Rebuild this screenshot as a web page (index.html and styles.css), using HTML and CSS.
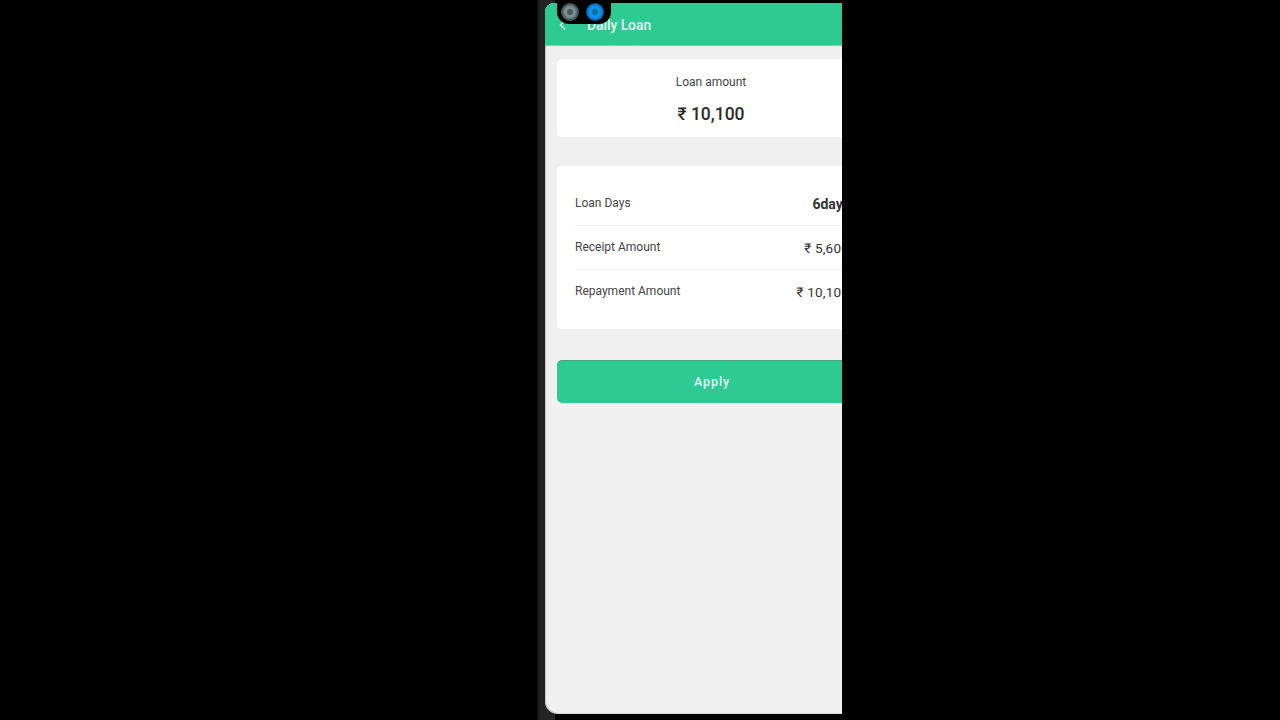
FILE: index.html
```html
<!DOCTYPE html>
<html lang="en">
  <head>
    <meta charset="UTF-8" />
    <meta name="viewport" content="width=device-width, initial-scale=1.0" />
    <title>Daily Loan</title>
    <link rel="stylesheet" href="styles.css">
  </head>
  <body>
    <div class="bezel">
      <div class="phone">
        <div class="screen">
          <header class="app-header">
            <svg class="back-icon" width="10" height="12" viewBox="0 0 10 12" fill="none">
              <path d="M7 1.5 L2.5 6 L7 10.5" stroke="#d8f5ea" stroke-width="1.5" />
            </svg>
            <span class="app-title">Daily Loan</span>
          </header>

          <div class="content">
            <section class="card amount-card">
              <div class="amount-label">Loan amount</div>
              <div class="amount-value">₹ 10,100</div>
            </section>

            <section class="card details-card">
              <div class="row">
                <span class="row-label">Loan Days</span>
                <span class="row-value strong">6days</span>
              </div>
              <div class="row">
                <span class="row-label">Receipt Amount</span>
                <span class="row-value">₹ 5,600</span>
              </div>
              <div class="row">
                <span class="row-label">Repayment Amount</span>
                <span class="row-value">₹ 10,100</span>
              </div>
            </section>

            <button class="apply-btn">Apply</button>
          </div>
        </div>

        <div class="camera-pill">
          <span class="lens lens-grey"></span>
          <span class="lens lens-blue"></span>
        </div>
      </div>
    </div>
  </body>
</html>
```

FILE: styles.css
```css
html,
body {
  height: 100%;
}

body {
  margin: 0;
  background: #000;
  font-family: Roboto, "Liberation Sans", sans-serif;
  overflow: hidden;
}

/* dark edge of the device, only seen left of the screen */
.bezel {
  width: 297px;
  height: 717px;
  margin-left: 537px;
  padding: 3px 0 0 8px;
  background: linear-gradient(to right, #0a0a0a 0, #242424 3px, #242424 100%) no-repeat;
  background-size: 18px 100%;
}

.phone {
  position: relative;
  width: 297px;
  height: 711px;
  overflow: hidden;
  background: #f0f0f0;
  border-radius: 9px 0 0 13px;
  border-bottom: 1px solid #d8d8d8;
  box-sizing: border-box;
  box-shadow: inset 1px 0 0 #c4c4c4;
}

.screen {
  width: 332px;
}

.app-header {
  display: flex;
  align-items: center;
  height: 41px;
  padding-top: 1px;
  background: #2dca93;
  border-bottom: 1px solid #5fdcb0;
  padding-left: 13px;
}

.back-icon {
  margin-right: 19px;
}

.app-title {
  color: #eafaf4;
  font-size: 13.8px;
  font-weight: 500;
}

.content {
  padding: 13px 12px 0;
}

.card {
  background: #fff;
  border-radius: 5px;
}

.amount-card {
  height: 78px;
  text-align: center;
  padding-top: 16px;
  box-sizing: border-box;
}

.amount-label {
  font-size: 12px;
  line-height: 14px;
  color: #444;
}

.amount-value {
  margin-top: 15px;
  font-size: 17.5px;
  line-height: 20px;
  font-weight: 500;
  color: #2b2b2b;
}

.details-card {
  margin-top: 29px;
  height: 163px;
  padding: 16px 18px 0 18px;
  box-sizing: border-box;
}

.row {
  display: flex;
  justify-content: space-between;
  align-items: center;
  height: 43.8px;
  padding-top: 2px;
  box-sizing: border-box;
  border-bottom: 1px solid #f0f0f0;
  font-size: 12px;
  color: #444;
}

.row:last-child {
  border-bottom: none;
}

.row-label {
  position: relative;
  top: -1px;
}

.row-value {
  font-size: 13.5px;
  letter-spacing: 0.2px;
  margin-right: -2px;
  color: #333;
}

.row-value.strong {
  font-size: 14px;
  font-weight: 700;
  letter-spacing: 0;
  margin-right: -3px;
}

.apply-btn {
  display: block;
  width: 100%;
  height: 43px;
  margin-top: 31px;
  padding: 0 0 2px 2px;
  background: #2dca93;
  border: none;
  border-top: 1px solid #4aa588;
  border-radius: 5px;
  color: #eafaf4;
  font-family: inherit;
  font-size: 12.5px;
  font-weight: 500;
  letter-spacing: 0.9px;
}

.camera-pill {
  position: absolute;
  left: 12px;
  top: -3px;
  width: 54px;
  height: 24px;
  background: #000;
  border-radius: 0 0 12px 12px;
  display: flex;
  align-items: center;
  gap: 7px;
  padding-left: 4px;
  box-sizing: border-box;
}

.lens {
  width: 18px;
  height: 18px;
  border-radius: 50%;
}

.lens-grey {
  background: radial-gradient(circle, #4a5a5a 0 2.5px, #7f9090 3.5px 5px, #3d5757 8px);
}

.lens-blue {
  background: radial-gradient(circle, #0c6f8f 0 2px, #0a93ee 4px 6px, #0d4f90 9px);
}
```
